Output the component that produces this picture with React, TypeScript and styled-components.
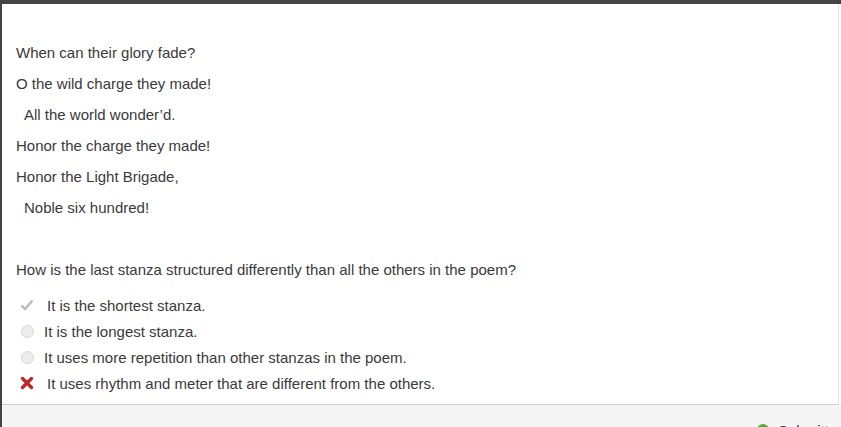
import React, { FC } from 'react';
import styled, { createGlobalStyle } from 'styled-components';

const Global = createGlobalStyle`
    html, body {
        margin: 0;
        padding: 0;
        background: #fff;
        overflow: hidden;
    }
`

const Frame = styled.div`
    height: 427px;
    border-top: 4px solid #444;
    border-left: 2px solid #444;
    box-sizing: border-box;
    display: flex;
    flex-direction: column;
    overflow: hidden;
    font-family: "Liberation Sans", Arial, sans-serif;
    font-size: 15px;
    color: #3a3a3a;
`

const Panel = styled.section`
    flex-shrink: 0;
    height: 401px;
    box-sizing: border-box;
    margin-right: 2px;
    border-right: 1px solid #e2e2e2;
    border-bottom: 1px solid #cfcfcf;
    padding: 33px 14px 0 14px;
    background: #fff;
`

const Line = styled.div<{ $indent?: boolean }>`
    height: 31px;
    line-height: 31px;
    white-space: pre;
    padding-left: ${({ $indent }) => ($indent ? '8px' : '0')};
`

const Question = styled(Line)`
    margin-top: 31px;
`

const Options = styled.ul`
    list-style: none;
    margin: 7px 0 0 0;
    padding: 0;
`

const Option = styled.li<{ $pad: number }>`
    height: 26px;
    display: flex;
    align-items: center;
    padding-left: 4px;
    span {
        margin-left: ${({ $pad }) => $pad}px;
    }
`

const IconBox = styled.div`
    width: 14px;
    height: 14px;
    display: flex;
    align-items: center;
    justify-content: center;
`

const Radio = styled.div`
    width: 11px;
    height: 11px;
    border-radius: 50%;
    border: 1px solid #d6d6d6;
    background: #ececec;
`

const Footer = styled.footer`
    flex-shrink: 0;
    height: 40px;
    background: #f5f5f5;
    display: flex;
    justify-content: flex-end;
    padding: 18px 0 0 0;
`

const Status = styled.div`
    display: flex;
    align-items: center;
    gap: 9px;
    width: 84px;
    height: 14px;
    white-space: nowrap;
`

const Dot = styled.div`
    flex-shrink: 0;
    width: 12px;
    height: 12px;
    border-radius: 50%;
    background: #5aa83a;
`

const Check: FC = () => (
    <svg width="14" height="14" viewBox="0 0 14 14">
        <path d="M1.5 7.5 L5 11 L12.5 2.5" fill="none" stroke="#bdbdbd" strokeWidth="2.6" strokeLinejoin="round" />
    </svg>
)

const Cross: FC = () => (
    <svg width="14" height="14" viewBox="0 0 14 14">
        <path d="M2.5 2.5 L11.5 11.5 M11.5 2.5 L2.5 11.5" fill="none" stroke="#c0272d" strokeWidth="3.4" strokeLinecap="round" />
    </svg>
)

const poem = [
    { text: 'When can their glory fade?' },
    { text: 'O the wild charge they made!' },
    { text: 'All the world wonder’d.', indent: true },
    { text: 'Honor the charge they made!' },
    { text: 'Honor the Light Brigade,' },
    { text: 'Noble six hundred!', indent: true },
]

const answers = [
    { text: 'It is the shortest stanza.', kind: 'check' },
    { text: 'It is the longest stanza.', kind: 'radio' },
    { text: 'It uses more repetition than other stanzas in the poem.', kind: 'radio' },
    { text: 'It uses rhythm and meter that are different from the others.', kind: 'cross' },
]

export default function App() {
    return (
        <Frame>
            <Global />
            <Panel>
                {poem.map((l) => (
                    <Line key={l.text} $indent={l.indent}>{l.text}</Line>
                ))}
                <Question>How is the last stanza structured differently than all the others in the poem?</Question>
                <Options>
                    {answers.map((a) => (
                        <Option key={a.text} $pad={a.kind === 'radio' ? 10 : 13}>
                            <IconBox>
                                {a.kind === 'check' && <Check />}
                                {a.kind === 'radio' && <Radio />}
                                {a.kind === 'cross' && <Cross />}
                            </IconBox>
                            <span>{a.text}</span>
                        </Option>
                    ))}
                </Options>
            </Panel>
            <Footer>
                <Status>
                    <Dot />
                    Submitted
                </Status>
            </Footer>
        </Frame>
    )
}
